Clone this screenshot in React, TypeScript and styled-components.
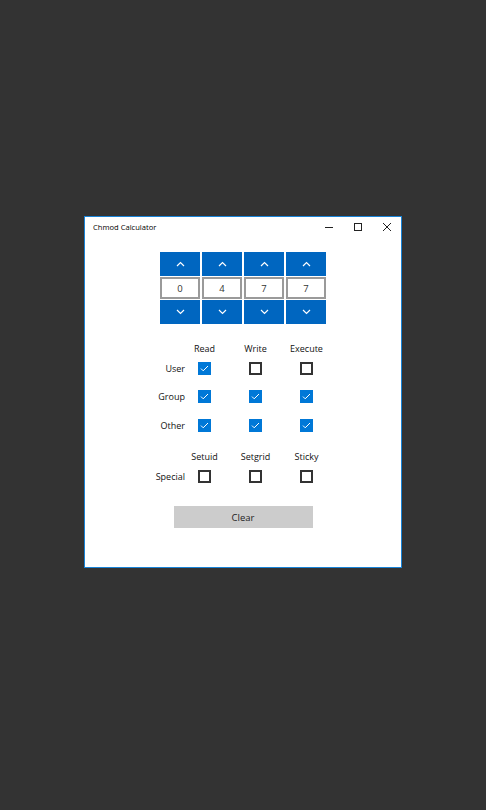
import { useState } from 'react';
import styled, { createGlobalStyle } from 'styled-components';

const GlobalStyle = createGlobalStyle`
  html, body {
    margin: 0;
    padding: 0;
    background: #333333;
    font-family: "Open Sans", "Noto Sans", "Liberation Sans", sans-serif;
  }
`;

// --- layout ---
const Desktop = styled.div`
  min-height: 810px;
  display: flex;
  flex-direction: column;
  align-items: center;
  padding-top: 216px;
  box-sizing: border-box;
`;

const Window = styled.div`
  width: 318px;
  height: 352px;
  box-sizing: border-box;
  border: 1px solid #1883d7;
  background: #ffffff;
  display: flex;
  flex-direction: column;
`;

const TitleBar = styled.div`
  height: 20px;
  display: flex;
  align-items: center;
  padding-left: 8px;
`;

const TitleText = styled.span`
  flex: 1;
  font-size: 7.6px;
  color: #000;
`;

const CaptionButton = styled.div`
  width: 29px;
  height: 20px;
  display: flex;
  align-items: center;
  justify-content: center;
  color: #222;
`;

const Content = styled.div`
  flex: 1;
  display: flex;
  flex-direction: column;
  align-items: center;
  padding-top: 15px;
`;

// --- octal spinners ---
const Spinners = styled.div`
  display: grid;
  grid-template-columns: repeat(4, 40px);
  grid-template-rows: 24px 22px 24px;
  column-gap: 2px;
  row-gap: 1px;
`;

const SpinButton = styled.button`
  border: none;
  padding: 0;
  margin: 0;
  background: #0066c0;
  display: flex;
  align-items: center;
  justify-content: center;
  cursor: pointer;
`;

const DigitBox = styled.div`
  box-sizing: border-box;
  border: 2px solid #9a9a9a;
  background: #fff;
  font-size: 9.5px;
  color: #333;
  display: flex;
  align-items: center;
  justify-content: center;
`;

// --- permission grid ---
const PermGrid = styled.div<{ $rowGap: number }>`
  display: grid;
  grid-template-columns: 37px repeat(3, 51px);
  grid-auto-rows: 20px;
  row-gap: ${({ $rowGap }) => $rowGap}px;
  align-items: center;
`;

const Section = styled.div<{ $top: number }>`
  margin-top: ${({ $top }) => $top}px;
  display: flex;
  flex-direction: column;
`;

const HeaderCell = styled.div`
  width: 39px;
  text-align: center;
  font-size: 9px;
  color: #111;
  white-space: nowrap;
`;

const RowLabel = styled.div`
  text-align: right;
  font-size: 9px;
  color: #111;
  white-space: nowrap;
`;

const Cell = styled.div`
  padding-left: 13px;
  display: flex;
  align-items: center;
`;

const Box = styled.div<{ $checked: boolean }>`
  width: 13px;
  height: 13px;
  box-sizing: border-box;
  background: ${({ $checked }) => ($checked ? '#0078d7' : '#fff')};
  border: ${({ $checked }) => ($checked ? 'none' : '2px solid #333')};
  display: flex;
  align-items: center;
  justify-content: center;
  cursor: pointer;
`;

const ClearButton = styled.button`
  margin-top: 20px;
  width: 139px;
  height: 22px;
  border: none;
  background: #cccccc;
  font-family: inherit;
  font-size: 9.5px;
  color: #222;
  cursor: pointer;
`;

const Chevron = ({ up }: { up?: boolean }) => (
  <svg width="9" height="6" viewBox="0 0 9 6">
    <path
      d={up ? 'M1 5 L4.5 1.5 L8 5' : 'M1 1 L4.5 4.5 L8 1'}
      stroke="#fff"
      strokeWidth="1.2"
      fill="none"
    />
  </svg>
);

const Check = ({ checked, onClick }: { checked: boolean; onClick: () => void }) => (
  <Box $checked={checked} onClick={onClick}>
    {checked && (
      <svg width="11" height="11" viewBox="0 0 11 11">
        <path d="M2 5.6 L4.2 7.8 L9 3" stroke="#fff" strokeWidth="1" fill="none" />
      </svg>
    )}
  </Box>
);

const classes = ['User', 'Group', 'Other'];
const perms = ['Read', 'Write', 'Execute'];
const specials = ['Setuid', 'Setgrid', 'Sticky'];

export default function App() {
  // digits[0] = special bits, digits[1..3] = user/group/other
  const [digits, setDigits] = useState([0, 4, 7, 7]);

  const bitOn = (d: number, idx: number) => ((digits[d] >> (2 - idx)) & 1) === 1;
  const toggle = (d: number, idx: number) =>
    setDigits((prev) => prev.map((v, i) => (i === d ? v ^ (1 << (2 - idx)) : v)));
  const step = (d: number, delta: number) =>
    setDigits((prev) => prev.map((v, i) => (i === d ? (v + delta + 8) % 8 : v)));

  return (
    <>
      <GlobalStyle />
      <Desktop>
        <Window>
          <TitleBar>
            <TitleText>Chmod Calculator</TitleText>
            <CaptionButton>
              <svg width="10" height="10" viewBox="0 0 10 10">
                <path d="M1 5.5 H9" stroke="#222" strokeWidth="1" />
              </svg>
            </CaptionButton>
            <CaptionButton>
              <svg width="10" height="10" viewBox="0 0 10 10">
                <rect x="1.5" y="1.5" width="7" height="7" stroke="#222" strokeWidth="1" fill="none" />
              </svg>
            </CaptionButton>
            <CaptionButton>
              <svg width="10" height="10" viewBox="0 0 10 10">
                <path d="M1 1 L9 9 M9 1 L1 9" stroke="#222" strokeWidth="1" />
              </svg>
            </CaptionButton>
          </TitleBar>

          <Content>
            <Spinners>
              {digits.map((_, i) => (
                <SpinButton key={`u${i}`} onClick={() => step(i, 1)}>
                  <Chevron up />
                </SpinButton>
              ))}
              {digits.map((v, i) => (
                <DigitBox key={`d${i}`}>{v}</DigitBox>
              ))}
              {digits.map((_, i) => (
                <SpinButton key={`n${i}`} onClick={() => step(i, -1)}>
                  <Chevron />
                </SpinButton>
              ))}
            </Spinners>

            <Section $top={14}>
              <PermGrid $rowGap={0}>
                <span />
                {perms.map((p) => (
                  <HeaderCell key={p}>{p}</HeaderCell>
                ))}
              </PermGrid>
              <PermGrid $rowGap={8.5}>
                {classes.map((c, ci) => [
                  <RowLabel key={c}>{c}</RowLabel>,
                  ...perms.map((p, pi) => (
                    <Cell key={c + p}>
                      <Check checked={bitOn(ci + 1, pi)} onClick={() => toggle(ci + 1, pi)} />
                    </Cell>
                  )),
                ])}
              </PermGrid>
            </Section>

            <Section $top={11}>
              <PermGrid $rowGap={0}>
                <span />
                {specials.map((s) => (
                  <HeaderCell key={s}>{s}</HeaderCell>
                ))}
                <RowLabel>Special</RowLabel>
                {specials.map((s, si) => (
                  <Cell key={s + 'c'}>
                    <Check checked={bitOn(0, si)} onClick={() => toggle(0, si)} />
                  </Cell>
                ))}
              </PermGrid>
            </Section>

            <ClearButton onClick={() => setDigits([0, 0, 0, 0])}>Clear</ClearButton>
          </Content>
        </Window>
      </Desktop>
    </>
  );
}
